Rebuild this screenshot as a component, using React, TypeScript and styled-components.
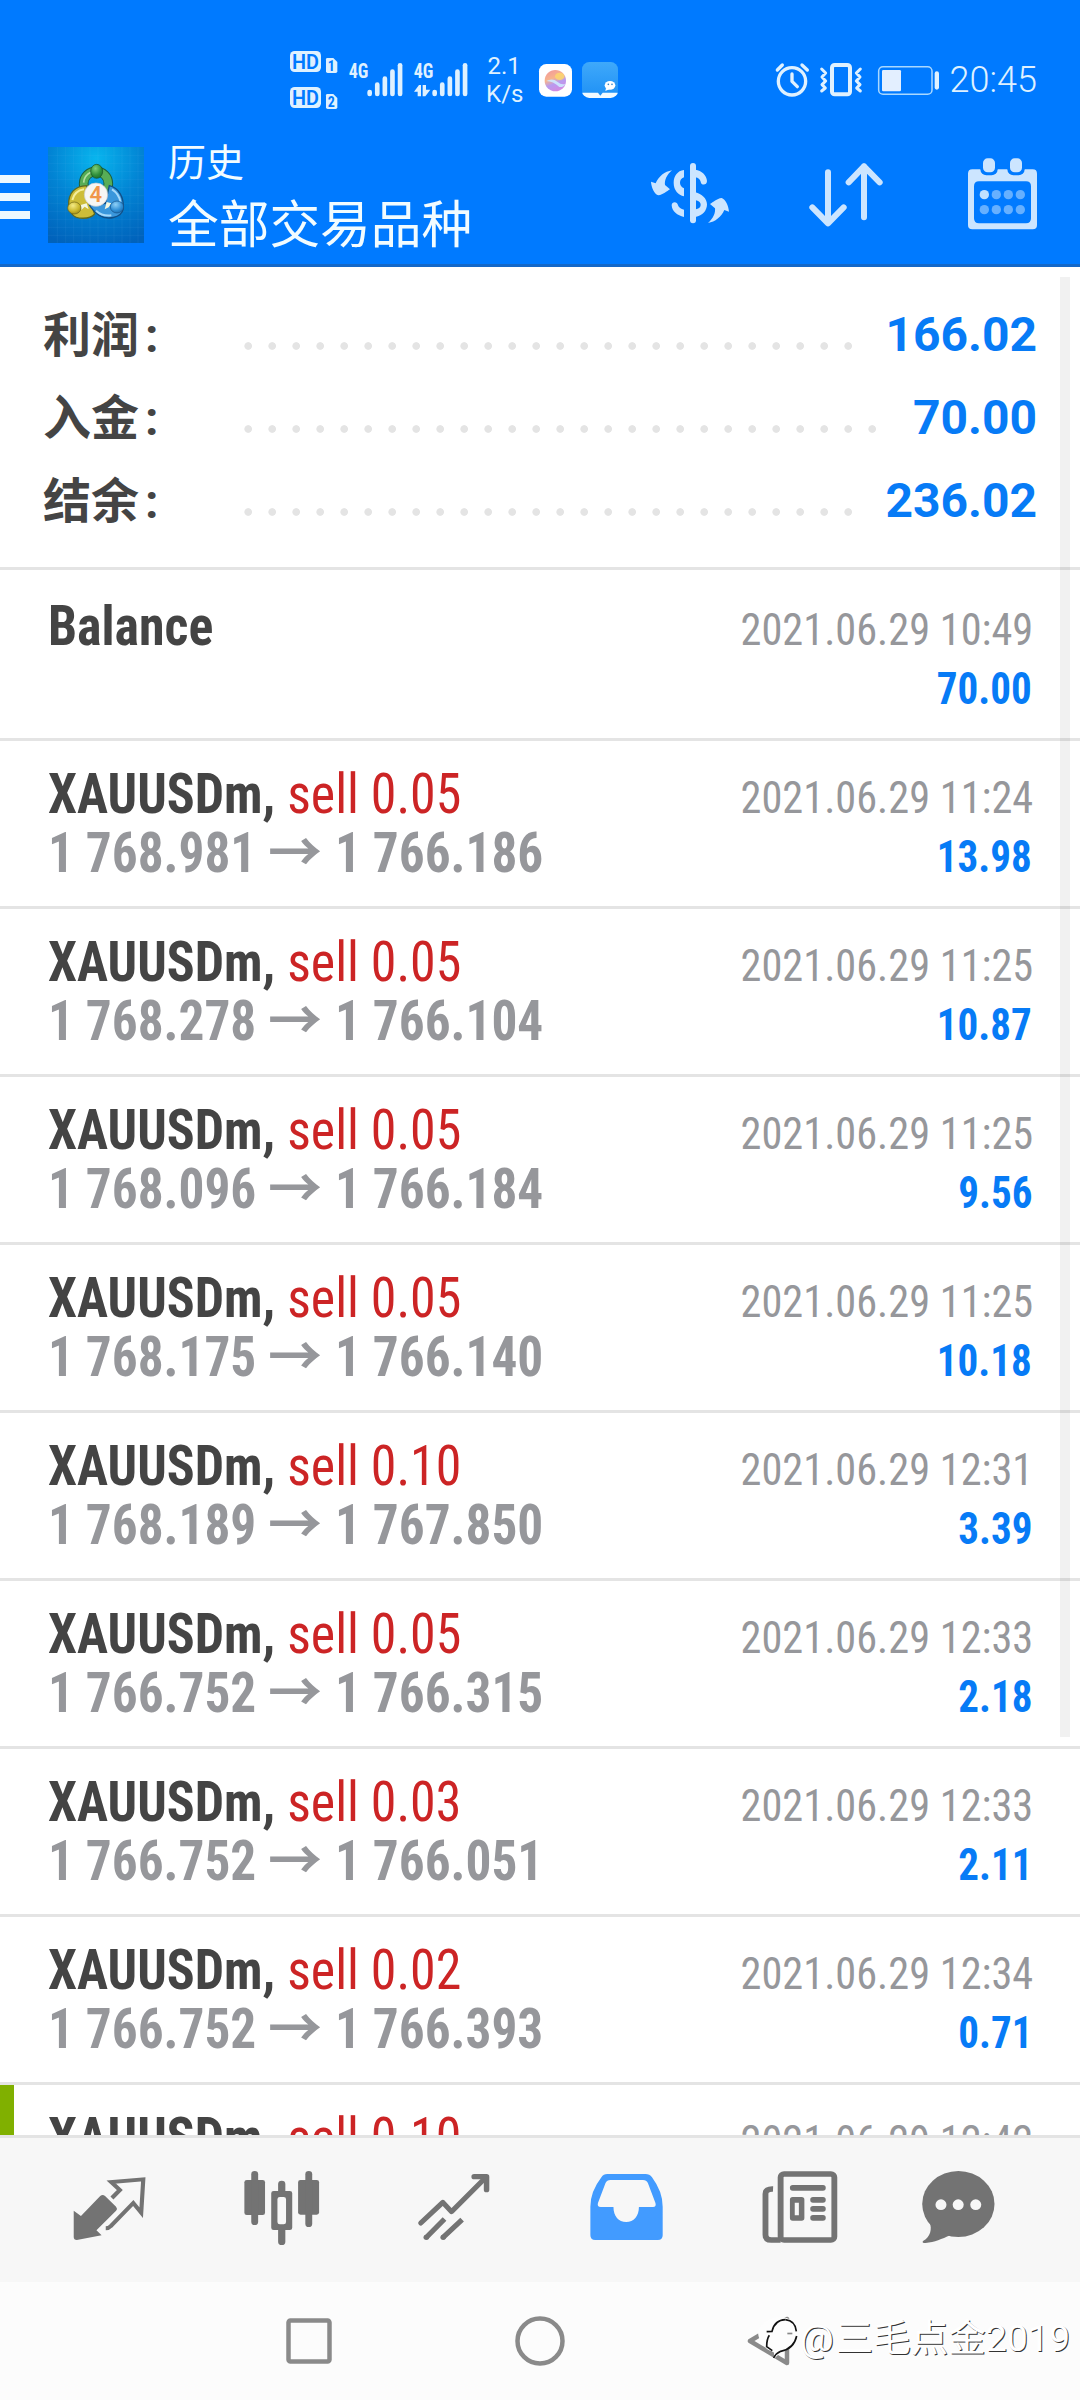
import React from "react";
import styled, { createGlobalStyle, css } from "styled-components";

const BLUE = "#007aff";
const VALUE = "#077bf6";
const LINE = "#e4e4e4";
const GREY = "#96979b";
const CONDENSED = `"Roboto Condensed", "Noto Sans CJK SC", sans-serif`;
const CJK = `"Noto Sans CJK SC", sans-serif`;

const GlobalStyle = createGlobalStyle`
  * { box-sizing: border-box; }
  body { margin: 0; background: #fff; font-family: Roboto, "Noto Sans CJK SC", sans-serif; }
`;

const Screen = styled.div`
  position: relative;
  display: flex;
  flex-direction: column;
  width: 1080px;
  height: 2400px;
  overflow: hidden;
  background: #fff;
`;

/* ---------- header ---------- */

const Header = styled.header`
  flex: none;
  height: 267px;
  background: ${BLUE};
  border-bottom: 3px solid #1468c8;
`;

const StatusBar = styled.div`
  display: flex;
  align-items: center;
  height: 135px;
  padding: 25px 43px 0 290px;
  color: #dff1ff;
`;

const Glyph = styled.svg<{ $gap?: string }>`
  flex: none;
  display: block;
  overflow: visible;
  margin-left: ${(p) => p.$gap ?? "0"};
`;

const NetSpeed = styled.div`
  width: 36px;
  margin: 0 0 1px 18.7px;
  font-size: 24px;
  line-height: 28px;
  text-align: center;
  white-space: nowrap;
`;

const Clock = styled.div`
  margin-left: 11px;
  font-size: 36px;
  line-height: 36px;
  font-weight: 300;
`;

const TitleBar = styled.div`
  display: flex;
  align-items: center;
  height: 129px;
  padding-right: 42px;
`;

const MenuButton = styled.div`
  display: flex;
  flex-direction: column;
  gap: 10px;
  width: 30px;
  margin: 0 18px 5px 0;
`;

const MenuBar = styled.span`
  height: 8px;
  background: #edf8ff;
`;

const Logo = styled.svg`
  display: block;
  flex: none;
  margin-bottom: 9px;
`;

const Titles = styled.div`
  margin: 0 auto 8px 24px;
  color: #f2fcff;
  font-family: ${CJK};
`;

const Subtitle = styled.div`
  font-size: 38px;
  line-height: 44px;
`;

const Title = styled.div`
  margin-top: 7px;
  font-size: 50.7px;
  line-height: 64px;
`;

const Actions = styled.div`
  display: flex;
  gap: 80px;
  margin-bottom: 12px;
`;

/* ---------- summary ---------- */

const Summary = styled.section`
  flex: none;
  height: 303px;
  padding: 26px 43px 0;
  border-bottom: 3px solid ${LINE};
`;

const SummaryRow = styled.div`
  display: flex;
  align-items: baseline;
  height: 83px;
  line-height: 83px;
  font-size: 48px;
  font-weight: 700;
`;

const SummaryLabel = styled.span`
  width: 193px;
  color: #444;
  font-family: ${CJK};
  line-height: 72px;
  transform: translateY(1px);
  i {
    margin-left: 6px;
    font-family: Roboto, sans-serif;
    font-style: normal;
  }
`;

const Leader = styled.span<{ $dots: number }>`
  align-self: flex-start;
  width: ${(p) => p.$dots * 24}px;
  height: 8px;
  margin-top: 49px;
  background: radial-gradient(circle at 12.2px 4px, ${LINE} 3.4px, transparent 4.2px) 0 0 / 24px 8px repeat-x;
`;

const SummaryValue = styled.span`
  margin-left: auto;
  color: ${VALUE};
`;

/* ---------- history list ---------- */

const List = styled.section`
  flex: 1;
  min-height: 0;
  overflow: hidden;
`;

const Row = styled.article<{ $operation?: boolean; $marked?: boolean }>`
  height: ${(p) => (p.$operation ? 171 : 168)}px;
  padding: ${(p) => (p.$operation ? 27 : 24)}px 47px 0 48px;
  border-bottom: 3px solid ${LINE};
  ${(p) => p.$marked && css`box-shadow: inset 14px 0 #80b000;`}
`;

const Line = styled.div`
  display: flex;
  align-items: baseline;
  height: 59px;
  line-height: 59px;
  font-family: ${CONDENSED};
  white-space: nowrap;
  &::before {
    content: "\\200b";
    width: 0;
    font-size: 54px;
  }
`;

const Name = styled.span`
  color: #444;
  font-size: 55px;
  line-height: 58px;
  font-weight: 700;
  transform: scaleX(0.943);
  transform-origin: left;
`;

const Side = styled.span`
  color: #cc2425;
  font-weight: 400;
`;

const Price = styled.span`
  width: 208px;
  color: ${GREY};
  font-size: 55px;
  line-height: 58px;
  font-weight: 700;
  transform: scaleX(0.933);
  transform-origin: left;
`;

const Arrow = styled.span`
  margin: 0 13px 0 12px;
  color: ${GREY};
  font-family: ${CJK};
  font-size: 54px;
  font-weight: 700;
  line-height: 46px;
`;

const Time = styled.span`
  margin-left: auto;
  color: ${GREY};
  font-size: 44px;
  transform: scaleX(0.962);
  transform-origin: right;
`;

const Amount = styled.span`
  margin-left: auto;
  color: ${VALUE};
  font-size: 44px;
  font-weight: 700;
  transform: translateX(-1px) scaleX(0.933);
  transform-origin: right;
`;

const ScrollThumb = styled.div`
  position: absolute;
  top: 277px;
  right: 10px;
  width: 10px;
  height: 1460px;
  background: rgba(0, 0, 0, 0.055);
`;

/* ---------- bottom bars ---------- */

const TabBar = styled.nav`
  flex: none;
  display: flex;
  height: 147px;
  padding: 0 48px 4px 24px;
  background: #f7f7f7;
  border-top: 3px solid ${LINE};
  color: #737373;
`;

const Tab = styled.div<{ $width?: number; $active?: boolean }>`
  display: flex;
  align-items: center;
  justify-content: center;
  width: ${(p) => p.$width ?? 172}px;
  color: ${(p) => (p.$active ? "#429bff" : "inherit")};
`;

const SystemBar = styled.div`
  flex: none;
  display: flex;
  align-items: center;
  gap: 182.5px;
  height: 118px;
  padding-left: 286px;
  background: #fcfcfc;
`;

const Watermark = styled.div`
  position: absolute;
  right: 10px;
  bottom: 37px;
  display: flex;
  align-items: center;
  color: #fff;
  font-size: 37.5px;
  line-height: 50px;
  font-family: Roboto, "Noto Sans CJK SC", sans-serif;
  font-weight: 400;
  text-shadow: 1px 1px 0 #333;
  white-space: nowrap;
`;

const At = styled.span`
  margin: 0 2px 0 1px;
`;

/* ---------- drawings ---------- */

type GlyphProps = { box: [number, number, number, number]; sx?: number; gap?: string; children: React.ReactNode };

const Icon = ({ box, sx = 3, gap, children }: GlyphProps) => (
  <Glyph $gap={gap} width={box[2] / sx} height={box[3] / 3} viewBox={box.join(" ")} preserveAspectRatio="none">
    {children}
  </Glyph>
);

const INK = "#dff1ff";
const badgeFont = { fontFamily: '"Roboto Condensed"', fontWeight: 700 };

const HdBadges = () => (
  <Icon box={[60, 63, 142, 174]}>
    {[0, 108].map((y, i) => (
      <g key={y} transform={`translate(0 ${y})`}>
        <rect x="60" y="63" width="93" height="63" rx="14" fill={INK} />
        <text x="66" y="116" fontSize="59" fontFamily="Roboto" fontWeight="600" fill={BLUE} textLength="81" lengthAdjust="spacingAndGlyphs">HD</text>
        <path d="M172 84H190L202 96V124Q202 129 197 129H173Q168 129 168 124V88Q168 84 172 84Z" fill={INK} />
        <text x="184" y="122" fontSize="42" textAnchor="middle" fill={BLUE} {...badgeFont}>{i + 1}</text>
      </g>
    ))}
  </Icon>
);

const Signal = ({ data, gap }: { data?: boolean; gap: string }) => (
  <Icon box={[236, 98, 161, 100]} gap={gap}>
    <text x="235" y="143" fontSize="62" fill={INK} textLength="59" lengthAdjust="spacingAndGlyphs" {...badgeFont}>4G</text>
    {[178, 156, 138, 117, 98].map((y, i) => (
      <rect key={y} x={291 + i * 22.8} y={y} width="14" height={198 - y} rx="7" fill={INK} />
    ))}
    {data && (
      <path d="M236 184L251 164H257V198H247V184ZM262 164H272V178H285L270 198H262Z" fill={INK} />
    )}
  </Icon>
);

const BrowserApp = () => (
  <Icon box={[807, 99, 99, 98]} gap="16.6px">
    <defs>
      <linearGradient id="orb" x1="0.2" y1="0" x2="0.6" y2="1">
        <stop offset="0" stopColor="#f29a9a" />
        <stop offset="0.4" stopColor="#f7b48c" />
        <stop offset="0.65" stopColor="#b79bf0" />
        <stop offset="1" stopColor="#d58ae0" />
      </linearGradient>
    </defs>
    <rect x="807" y="99" width="99" height="98" rx="22" fill="#fff" />
    <circle cx="856" cy="149" r="32" fill="url(#orb)" />
    <ellipse cx="869" cy="136" rx="14" ry="11" fill="#fbd66f" opacity="0.85" />
    <path d="M828 150Q848 140 862 152T887 158Q880 170 868 168Q850 150 828 150Z" fill="#cdeaff" opacity="0.9" />
  </Icon>
);

const ChatApp = () => (
  <Icon box={[936, 93, 108, 108]} gap="10px">
    <defs>
      <clipPath id="tile"><rect x="936" y="93" width="108" height="108" rx="22" /></clipPath>
      <linearGradient id="sky" x1="0" y1="0" x2="0" y2="1">
        <stop offset="0" stopColor="#3fa9fa" />
        <stop offset="1" stopColor="#1e90f5" />
      </linearGradient>
    </defs>
    <g clipPath="url(#tile)">
      <rect x="936" y="93" width="108" height="108" fill="url(#sky)" />
      <path d="M936 185H984L991 194L998 185H1044V201H936Z" fill="#f2faff" />
    </g>
    <ellipse cx="1020" cy="163" rx="16" ry="13" fill="#fff" />
    <path d="M1008 171L1006 180L1018 175Z" fill="#fff" />
    <circle cx="1015" cy="160" r="2.5" fill="#2a80c8" />
    <circle cx="1026" cy="160" r="2.5" fill="#2a80c8" />
  </Icon>
);

const Alarm = () => (
  <Icon box={[109, 98, 98, 100]} gap="auto">
    <g fill="none" stroke={INK} strokeWidth="10" strokeLinecap="round" strokeLinejoin="round">
      <circle cx="157" cy="153" r="41" />
      <path d="M157 131V153L173 169M113 119L128 104M187 104L203 119" />
    </g>
  </Icon>
);

const Vibrate = () => (
  <Icon box={[243, 98, 127, 100]} gap="12px">
    <g fill="none" stroke={INK} strokeWidth="9" strokeLinejoin="round" strokeLinecap="round">
      <rect x="279" y="104" width="54" height="88" rx="8" strokeWidth="12" />
      <path d="M248 116L260 128L249 140L260 152L249 163L259 173L248 182M364 116L352 128L363 140L352 152L363 163L353 173L364 182" />
    </g>
  </Icon>
);

const Battery = () => (
  <Icon box={[415, 105, 183, 87]} gap="15px">
    <rect x="417" y="107" width="160" height="83" rx="13" fill="none" stroke="#a9d8ff" strokeWidth="4.5" />
    <rect x="427" y="117" width="57" height="64" rx="4" fill="#e3efff" />
    <rect x="585" y="121" width="13" height="55" rx="6.5" fill={INK} />
  </Icon>
);

const AppLogo = () => (
  <Logo width="96" height="96" viewBox="24 21 288 288">
    <defs>
      <radialGradient id="bg" cx="0.5" cy="0.12" r="0.95">
        <stop offset="0" stopColor="#08b5ee" />
        <stop offset="0.5" stopColor="#0284d4" />
        <stop offset="1" stopColor="#0062bb" />
      </radialGradient>
      <radialGradient id="gr" cx="0.4" cy="0.3" r="0.8"><stop offset="0" stopColor="#7fcf7a" /><stop offset="0.6" stopColor="#2f8f3a" /><stop offset="1" stopColor="#1c6a28" /></radialGradient>
      <radialGradient id="ye" cx="0.4" cy="0.3" r="0.8"><stop offset="0" stopColor="#f3ea86" /><stop offset="0.6" stopColor="#c9b62a" /><stop offset="1" stopColor="#8f7f16" /></radialGradient>
      <radialGradient id="bl" cx="0.4" cy="0.3" r="0.8"><stop offset="0" stopColor="#8fd0f7" /><stop offset="0.6" stopColor="#2f8fd6" /><stop offset="1" stopColor="#1663a6" /></radialGradient>
    </defs>
    <rect x="24" y="21" width="288" height="288" fill="url(#bg)" />
    <path d="M52 21V309M77 21V309M101 21V309M126 21V309M150 21V309M174 21V309M198 21V309M222 21V309M246 21V309M270 21V309M294 21V309M24 46H312M24 70H312M24 94H312M24 118H312M24 142H312M24 166H312M24 190H312M24 214H312M24 238H312M24 262H312M24 286H312" stroke="#8fd8ff" strokeOpacity="0.1" strokeWidth="2" />
    <g fill="none">
      <circle cx="168" cy="131" r="37" stroke="#1d5f3c" strokeWidth="29" />
      <circle cx="168" cy="131" r="37" stroke="#57ad56" strokeWidth="23" />
      <path d="M131 128A38 38 0 0 1 152 97" stroke="#b3e0a2" strokeWidth="5" />
      <path d="M86 196C84 158 106 138 140 137L156 200L164 222C150 238 108 240 96 222Z" fill="#cdbd38" stroke="#5d6a22" strokeWidth="4" />
      <path d="M97 180Q104 152 132 148" stroke="#f4ee9a" strokeWidth="6" />
      <path d="M208 137C236 144 252 170 250 206C244 236 200 240 178 226Q158 212 148 195L196 190Z" fill="#3a97dc" stroke="#124f86" strokeWidth="4" />
      <path d="M216 148Q238 162 241 186M168 212Q188 230 214 226" stroke="#a5d9fa" strokeWidth="6" />
      <path d="M122 195L140 190L146 208L134 200L124 210ZM214 190L200 186L194 208L206 202Z" fill="#f4f7e0" />
    </g>
    <ellipse cx="170" cy="94" rx="18" ry="21" fill="url(#gr)" stroke="#174f24" strokeWidth="2" />
    <ellipse cx="103" cy="204" rx="20" ry="18" fill="url(#ye)" stroke="#6d6417" strokeWidth="2" />
    <ellipse cx="231" cy="201" rx="20" ry="18" fill="url(#bl)" stroke="#135086" strokeWidth="2" />
    <circle cx="168" cy="164" r="35" fill="#f6f6f4" stroke="#c9ccd0" strokeWidth="2" />
    <text x="167" y="187" fontSize="66" fontFamily="Roboto" fontWeight="600" textAnchor="middle" fill="#f0964a">4</text>
  </Logo>
);

const swapArrow = "M216 120C200 134 193 150 195 164L210 177C200 183 190 193 175 195C164 192 154 172 153 154L167 159C176 138 194 124 216 120Z";

const Currency = () => (
  <Icon box={[150, 80, 240, 220]}>
    <g fill="#cce5ff">
      <rect x="270" y="98" width="18" height="181" rx="9" />
      <path d="M252 119C232 121 221 138 221 157C221 180 235 194 252 198V174C243 170 240 163 240 157C240 150 243 144 252 141Z" />
      <path d="M252 260C232 256 216 243 215 225C215 213 232 212 234 225C236 232 243 236 252 238Z" />
      <path d="M286 118C305 120 320 135 321 152C321 166 303 166 302 154C300 147 295 142 286 141Z" />
      <path fillRule="evenodd" d="M286 186C305 190 321 205 321 222C321 240 308 257 286 260ZM288 210V237C299 234 302 229 302 223C302 217 298 212 288 210Z" />
      <path d={swapArrow} />
      <path d={swapArrow} transform="rotate(180 270 199)" />
    </g>
  </Icon>
);

const Sort = () => (
  <Icon box={[630, 80, 231, 220]}>
    <path d="M684 126V278M637 231L684 279L731 231M792 261V108M746 156L792 108L839 156" fill="none" stroke="#cce5ff" strokeWidth="18" strokeLinecap="round" strokeLinejoin="round" />
  </Icon>
);

const Calendar = () => (
  <Icon box={[1101, 80, 213, 220]}>
    <path fillRule="evenodd" fill="#cce5ff" d="M1117 117H1298Q1311 117 1311 130V284Q1311 297 1298 297H1117Q1104 297 1104 284V130Q1104 117 1117 117ZM1137 153Q1122 153 1122 168V264Q1122 279 1137 279H1278Q1293 279 1293 264V168Q1293 153 1278 153Z" />
    {[1149, 1230].map((x) => (
      <g key={x}>
        <rect x={x - 8} y="76" width="52" height="59" rx="18" fill={BLUE} />
        <rect x={x} y="84" width="36" height="42" rx="14" fill="#cce5ff" />
      </g>
    ))}
    {[193, 238].map((y, r) =>
      [1153, 1189, 1225, 1261].map((x, c) => (
        <circle key={`${x}${y}`} cx={x} cy={y} r="14" fill={r + c === 0 ? "#bfe0ff" : "#66b0ff"} />
      ))
    )}
  </Icon>
);

const TAB_SX = 2.904;

const QuotesIcon = () => (
  <Icon box={[210, 330, 220, 228]} sx={TAB_SX}>
    <path d="M215 452L236 468L292 408Q299 402 306 408L338 440Q343 446 338 452L281 511L296 526L224 540Q215 540 215 531Z" fill="currentColor" />
    <path d="M326 414L349 390L324 366L417 358L411 458L388 429L322 499Q317 505 308 505" fill="none" stroke="currentColor" strokeWidth="12" />
  </Icon>
);

const ChartIcon = () => (
  <Icon box={[705, 330, 225, 228]} sx={TAB_SX}>
    <g fill="currentColor">
      <rect x="709" y="360" width="60" height="105" rx="7" />
      <rect x="729" y="333" width="20" height="162" rx="10" />
      <rect x="865" y="360" width="61" height="104" rx="7" />
      <rect x="886" y="333" width="20" height="168" rx="10" />
      <path fillRule="evenodd" d="M794 393H841Q848 393 848 400V503Q848 510 841 510H794Q787 510 787 503V400Q787 393 794 393ZM812 411Q805 411 805 418V486Q805 493 812 493H823Q830 493 830 486V418Q830 411 823 411Z" />
      <path d="M807 395V372Q807 362 817.5 362T828 372V395ZM807 508V545Q807 555 817.5 555T828 545V508Z" />
    </g>
  </Icon>
);

const TradeIcon = () => (
  <Icon box={[1210, 330, 214, 228]} sx={TAB_SX}>
    <g fill="none" stroke="currentColor" strokeWidth="15" strokeLinejoin="round">
      <path d="M1221 489L1285 427L1310 455L1408 354" strokeLinecap="round" />
      <path d="M1376 350H1412V389" strokeLinecap="round" strokeWidth="16" />
      <path d="M1236 533L1290 477M1285 533L1341 479" />
    </g>
    <circle cx="1237" cy="532" r="8" fill="currentColor" />
    <circle cx="1286" cy="532" r="8" fill="currentColor" />
  </Icon>
);

const HistoryIcon = () => (
  <Icon box={[142, 330, 218, 228]} sx={TAB_SX} gap="2px">
    <path fill="currentColor" fillRule="evenodd" d="M195 342H306Q318 342 325 352Q356 395 356 440V526Q356 540 342 540H160Q146 540 146 526V440Q146 395 178 352Q184 342 195 342ZM204 360Q194 360 190 369L168 429Q165 441 176 441H213C213 468 228 486 250 486C272 486 287 468 287 441H328Q338 441 335 429L313 369Q309 360 299 360Z" />
  </Icon>
);

const NewsIcon = () => (
  <Icon box={[642, 330, 226, 228]} sx={TAB_SX}>
    <g fill="none" stroke="currentColor" strokeWidth="17">
      <rect x="699" y="342" width="156" height="198" rx="10" />
      <path d="M677 387Q655 386 655 402V524Q655 540 672 540H699" />
    </g>
    <g fill="currentColor">
      <rect x="726" y="375" width="104" height="17" rx="8" />
      <path fillRule="evenodd" d="M735 411H760Q768 411 768 419V474Q768 482 760 482H734Q726 482 726 474V419Q726 411 734 411ZM740 428V466H752V428Z" />
      <rect x="785" y="411" width="45" height="17" rx="8" />
      <rect x="785" y="438" width="45" height="17" rx="8" />
      <rect x="785" y="465" width="45" height="17" rx="8" />
    </g>
  </Icon>
);

const ChatIcon = () => (
  <Icon box={[1105, 330, 216, 228]} sx={TAB_SX}>
    <ellipse cx="1213.5" cy="432" rx="105" ry="99" fill="currentColor" />
    <path d="M1130 488C1138 505 1132 532 1112 542C1107 547 1111 549 1118 549C1145 547 1165 537 1190 526Z" fill="currentColor" />
    {[1163, 1213, 1264].map((x) => <circle key={x} cx={x} cy="434" r="16" fill="#f7f7f7" />)}
  </Icon>
);

const SystemIcon = ({ width, children }: { width: number; children: React.ReactNode }) => (
  <svg width={width} height="50" viewBox={`0 0 ${width} 50`} fill="none" stroke="#8a8a8a" strokeWidth="4.5" strokeLinejoin="round">{children}</svg>
);

const WatermarkLogo = () => (
  <svg width="42" height="44" viewBox="75 62 126 132">
    <path d="M140 66C175 62 196 85 196 118C194 148 172 164 150 168L126 190V168C105 166 100 158 100 150C84 140 78 125 78 108C88 85 112 68 140 66Z" fill="#fdfdfd" />
    <g fill="none" stroke="#111" strokeWidth="5">
      <path d="M160 73Q190 76 193 108M194 122Q186 160 146 168Q132 174 125 188" />
      <path d="M160 73Q128 74 120 108L104 109M112 120Q104 132 104 154L121 166" />
    </g>
    <path d="M166 112H181V117H166Z" fill="#888" />
  </svg>
);

/* ---------- data ---------- */

const totals = [
  { label: "利润", value: "166.02", dots: 26 },
  { label: "入金", value: "70.00", dots: 27 },
  { label: "结余", value: "236.02", dots: 26 },
];

type Deal = { side: string; time: string; open?: string; close?: string; profit?: string; marked?: boolean };

const deals: Deal[] = [
  { side: "sell 0.05", time: "11:24", open: "1 768.981", close: "1 766.186", profit: "13.98" },
  { side: "sell 0.05", time: "11:25", open: "1 768.278", close: "1 766.104", profit: "10.87" },
  { side: "sell 0.05", time: "11:25", open: "1 768.096", close: "1 766.184", profit: "9.56" },
  { side: "sell 0.05", time: "11:25", open: "1 768.175", close: "1 766.140", profit: "10.18" },
  { side: "sell 0.10", time: "12:31", open: "1 768.189", close: "1 767.850", profit: "3.39" },
  { side: "sell 0.05", time: "12:33", open: "1 766.752", close: "1 766.315", profit: "2.18" },
  { side: "sell 0.03", time: "12:33", open: "1 766.752", close: "1 766.051", profit: "2.11" },
  { side: "sell 0.02", time: "12:34", open: "1 766.752", close: "1 766.393", profit: "0.71" },
  { side: "sell 0.10", time: "12:42", marked: true },
];

export default function App() {
  return (
    <Screen>
      <GlobalStyle />
      <Header>
        <StatusBar>
          <HdBadges />
          <Signal gap="11.4px" />
          <Signal gap="11.4px" data />
          <NetSpeed>2.1<br />K/s</NetSpeed>
          <BrowserApp />
          <ChatApp />
          <Alarm />
          <Vibrate />
          <Battery />
          <Clock>20:45</Clock>
        </StatusBar>
        <TitleBar>
          <MenuButton><MenuBar /><MenuBar /><MenuBar /></MenuButton>
          <AppLogo />
          <Titles>
            <Subtitle>历史</Subtitle>
            <Title>全部交易品种</Title>
          </Titles>
          <Actions><Currency /><Sort /><Calendar /></Actions>
        </TitleBar>
      </Header>

      <Summary>
        {totals.map((t) => (
          <SummaryRow key={t.label}>
            <SummaryLabel>{t.label}<i>:</i></SummaryLabel>
            <Leader $dots={t.dots} />
            <SummaryValue>{t.value}</SummaryValue>
          </SummaryRow>
        ))}
      </Summary>

      <List>
        <Row $operation>
          <Line><Name>Balance</Name><Time>2021.06.29 10:49</Time></Line>
          <Line><Amount>70.00</Amount></Line>
        </Row>
        {deals.map((d, i) => (
          <Row key={i} $marked={d.marked}>
            <Line>
              <Name>XAUUSDm, <Side>{d.side}</Side></Name>
              <Time>2021.06.29 {d.time}</Time>
            </Line>
            {d.open && (
              <Line>
                <Price>{d.open}</Price>
                <Arrow>→</Arrow>
                <Price>{d.close}</Price>
                <Amount>{d.profit}</Amount>
              </Line>
            )}
          </Row>
        ))}
      </List>

      <TabBar>
        <Tab><QuotesIcon /></Tab>
        <Tab><ChartIcon /></Tab>
        <Tab><TradeIcon /></Tab>
        <Tab $active><HistoryIcon /></Tab>
        <Tab $width={175}><NewsIcon /></Tab>
        <Tab $width={142}><ChatIcon /></Tab>
      </TabBar>

      <SystemBar>
        <SystemIcon width={46}><rect x="2.5" y="4.5" width="41" height="41" rx="2" /></SystemIcon>
        <SystemIcon width={50}><circle cx="25" cy="25" r="22.5" /></SystemIcon>
        <SystemIcon width={43}><path d="M3 25L40 3V47Z" /></SystemIcon>
      </SystemBar>

      <ScrollThumb />
      <Watermark><WatermarkLogo /><At>@</At>三毛点金2019</Watermark>
    </Screen>
  );
}
